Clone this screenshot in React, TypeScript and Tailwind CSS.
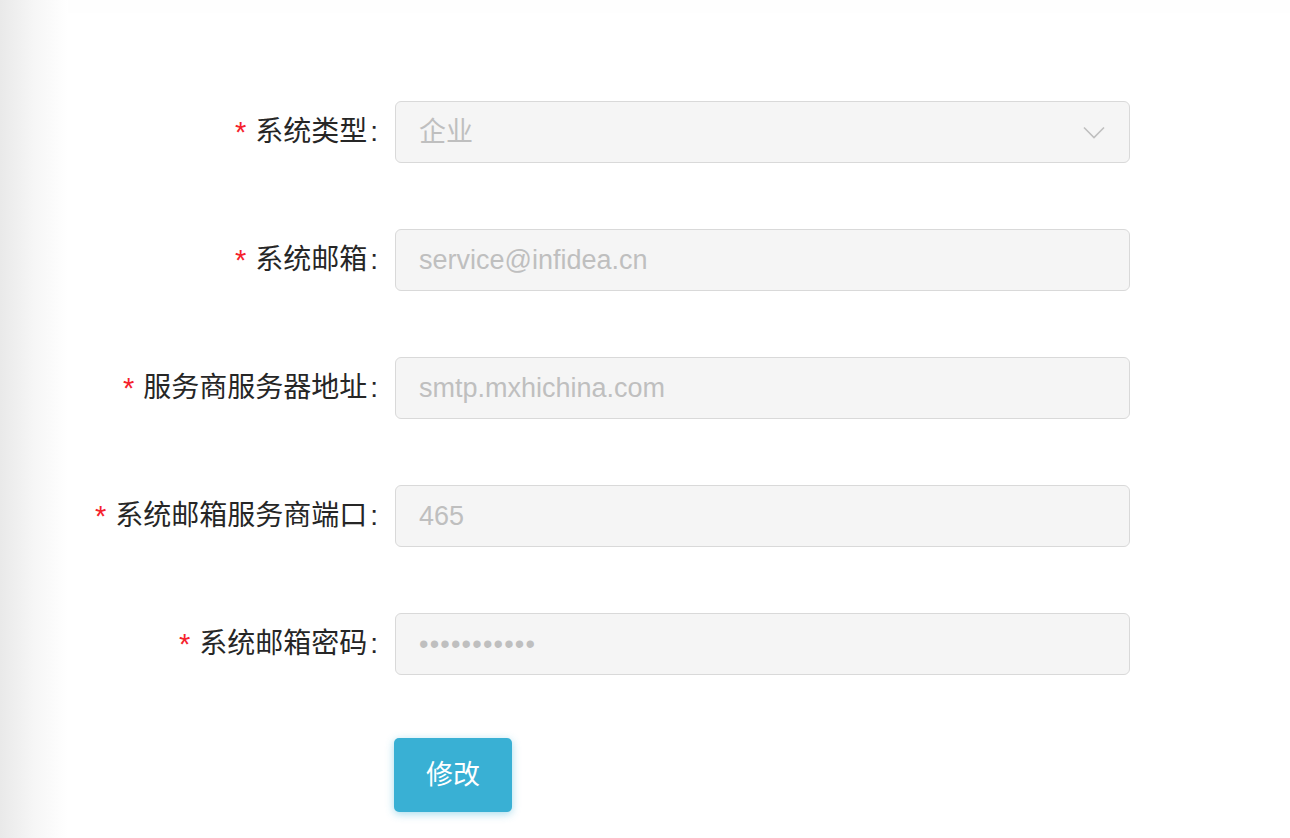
import React from "react";

const rows = [
  { label: "系统类型", value: "企业", select: true },
  { label: "系统邮箱", value: "service@infidea.cn" },
  { label: "服务商服务器地址", value: "smtp.mxhichina.com" },
  { label: "系统邮箱服务商端口", value: "465" },
  { label: "系统邮箱密码", value: "•••••••••••", password: true },
];

const font = "font-['Liberation_Sans','Noto_Sans_CJK_SC',sans-serif]";

export default function App() {
  return (
    <div className={`flex min-h-[838px] w-[1290px] bg-white ${font}`}>
      <div className="w-[68px] shrink-0 bg-gradient-to-r from-[#e9e9e9] via-[#f6f6f6] to-white" />
      <div className="flex flex-1 flex-col">
        <div className="h-[13px] bg-[#fefefe]" />
        <div className="flex flex-col gap-[66px] pt-[88px]">
          {rows.map((r) => (
            <div key={r.label} className="flex items-center">
              <div className="flex w-[327px] shrink-0 items-center justify-end pr-[16px] text-[28px] leading-none text-[#262626]">
                <span className="mr-[9px] text-[29px] text-[#f5222d]">*</span>
                <span>{r.label}</span>
                <span className="ml-[3px] mr-[1px]">:</span>
              </div>
              <div className="relative flex h-[62px] w-[735px] items-center rounded-[6px] border border-[#d9d9d9] bg-[#f5f5f5] pl-[23px] text-[27px] text-[#bfbfbf]">
                {r.password ? (
                  <span className="text-[27px] tracking-[1.2px] text-[#bfbfbf]">{r.value}</span>
                ) : (
                  <span>{r.value}</span>
                )}
                {r.select && (
                  <svg
                    className="absolute right-[24px] top-[24px]"
                    width="22"
                    height="13"
                    viewBox="0 0 22 13"
                    fill="none"
                  >
                    <path d="M1 1.5 L11 11.5 L21 1.5" stroke="#bfbfbf" strokeWidth="1.6" />
                  </svg>
                )}
              </div>
            </div>
          ))}
          <div className="-mt-[3px] flex">
            <div className="w-[326px] shrink-0" />
            <button className="h-[74px] w-[118px] rounded-[5px] bg-[#39b0d4] text-[27px] text-white shadow-[0_2px_8px_rgba(57,176,212,0.45)]">
              修改
            </button>
          </div>
        </div>
      </div>
    </div>
  );
}
